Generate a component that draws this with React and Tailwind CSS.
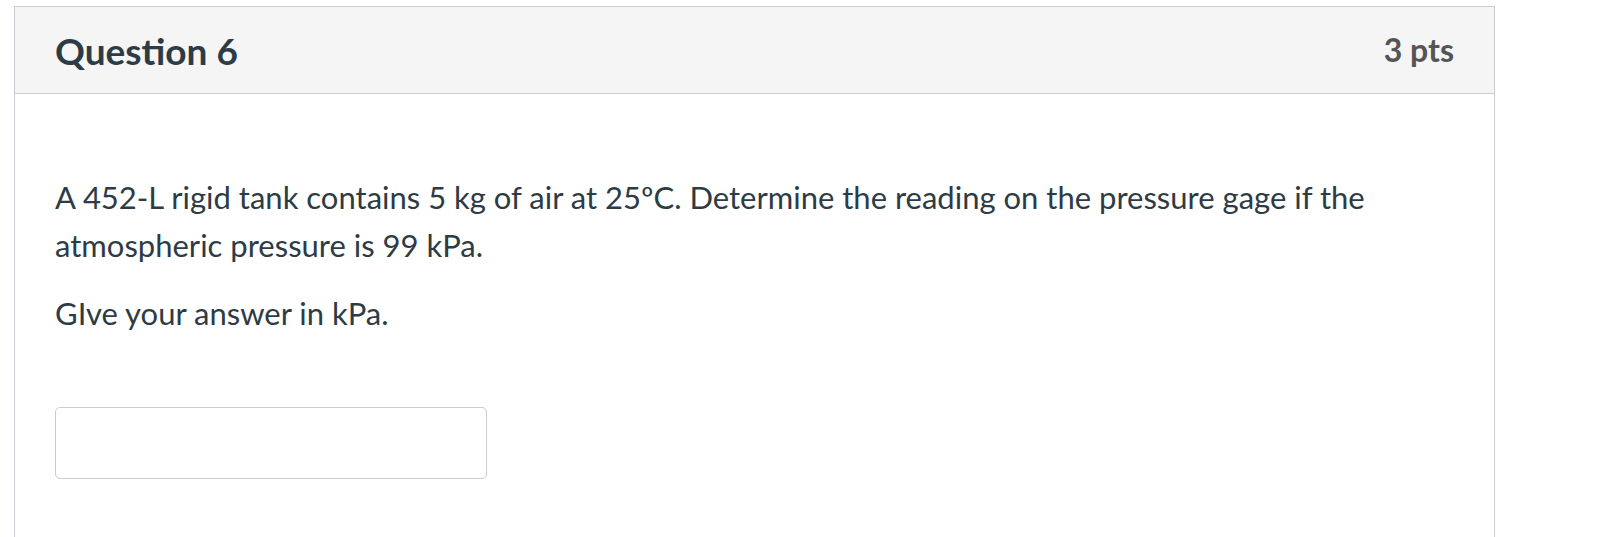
import React from 'react';

const App = () => {
  return (
    <div
      className="min-h-screen bg-white pt-[6px] pl-[14px] pr-[105px]"
      style={{ fontFamily: 'Lato, "Noto Sans", sans-serif' }}
    >
      <div className="border border-[#c7cdd1] h-[600px]">
        {/* Header */}
        <div className="flex items-center justify-between h-[87px] bg-[#f5f5f5] border-b border-[#c7cdd1] pl-[40px] pr-[40px]">
          <h2 className="text-[37px] font-bold text-[#2d3b45] leading-none">Question 6</h2>
          <div className="text-[32px] font-bold text-[#555] leading-none">3 pts</div>
        </div>

        {/* Body */}
        <div className="pl-[40px] pt-[79px] text-[#2d3b45] text-[31px] leading-[48px]">
          <p className="max-w-[1360px]">
            A 452-L rigid tank contains 5 kg of air at 25ºC. Determine the reading on the pressure gage if the atmospheric pressure is 99 kPa.
          </p>
          <p className="mt-[20px]">GIve your answer in kPa.</p>
          <div className="mt-[70px]">
            <input
              type="text"
              className="w-[432px] h-[72px] rounded-[5px] border-[1.5px] border-[#c7cdd1] bg-white outline-none"
            />
          </div>
        </div>
      </div>
    </div>
  );
};

export default App;
